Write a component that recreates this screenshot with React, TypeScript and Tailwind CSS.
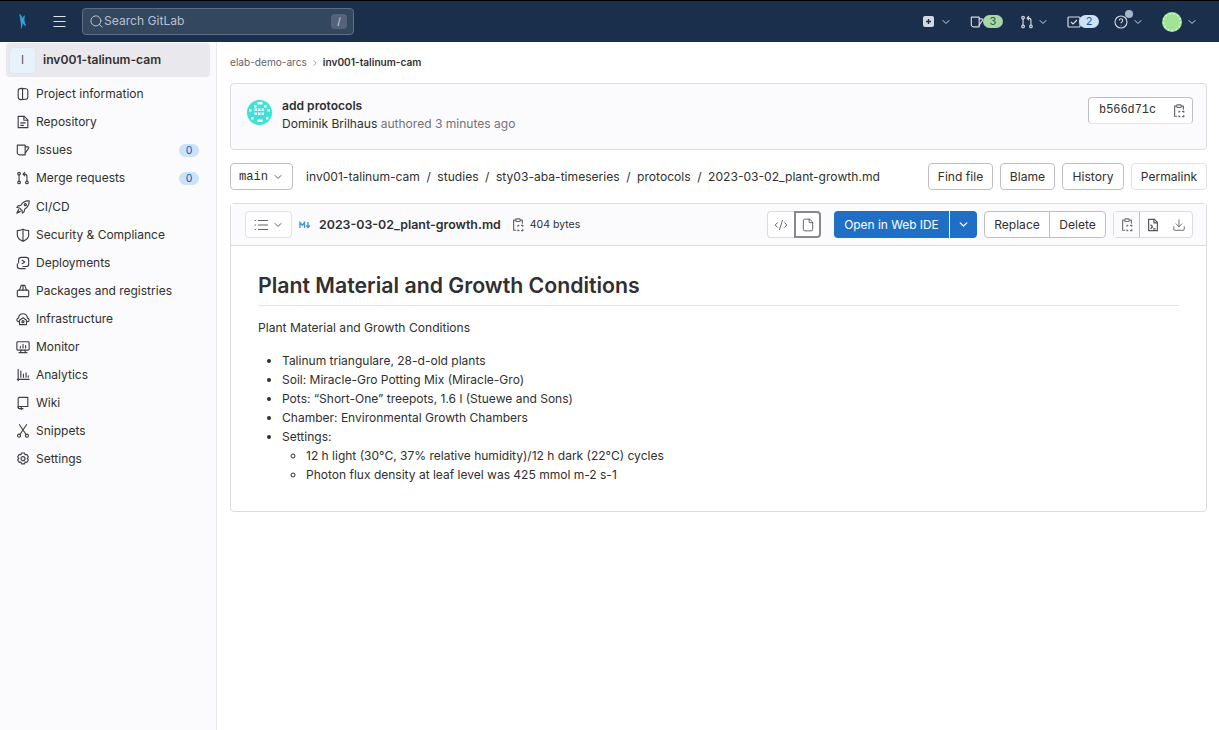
import { ChevronDown, ChevronRight, CodeXml, Download, File, Menu, Search } from "lucide-react"
import type { ReactNode } from "react"

const Svg = ({ children, size = 14, className = "" }: { children: ReactNode; size?: number; className?: string }) => (
  <svg
    width={size}
    height={size}
    viewBox="0 0 16 16"
    fill="none"
    stroke="currentColor"
    strokeWidth="1.3"
    strokeLinecap="round"
    strokeLinejoin="round"
    className={`shrink-0 ${className}`}
  >
    {children}
  </svg>
)

const IssueIcon = ({ size = 14 }: { size?: number }) => (
  <Svg size={size}>
    <path d="M1.500 2.500h9v11H4a2.500 2.500 0 0 1-2.500-2.500z" />
    <path d="M10.500 4.500h3.200c.8 0 1.100.7.8 1.300l-4 5.700" />
  </Svg>
)

const MergeIcon = ({ size = 14 }: { size?: number }) => (
  <Svg size={size}>
    <circle cx="3.500" cy="3" r="1.500" />
    <circle cx="3.500" cy="13" r="1.500" />
    <circle cx="12.500" cy="13" r="1.500" />
    <path d="M3.500 4.500v7M12.500 11.500V6c0-1.500-1-2.500-2.500-2.500H8.500M10 1.500l-2 2 2 2" />
  </Svg>
)

const CopyIcon = () => (
  <Svg size={14}>
    <path d="M5 2.500H3v11.500h2.500M11 2.500h2V6" />
    <rect x="5.500" y="1" width="5" height="3" rx="1" />
    <path d="M8 9.500V8.500h1M12 8.500h1.500v1M13.500 13v1.500h-1.500M9 14.500H8v-1" />
  </Svg>
)

const icons: Record<string, ReactNode> = {
  project: (
    <Svg>
      <path d="M6.500 1.500 11.500 2c1.200.1 2 .8 2 2v8c0 1.200-.8 1.900-2 2l-5 .5c-2.200 0-4-.8-4-2.500V4c0-1.700 1.800-2.500 4-2.500z" />
      <path d="M7.500 1.700v12.600" />
    </Svg>
  ),
  repo: (
    <Svg>
      <path d="M2.500 1.500h7L13.500 5.500v9h-11z" />
      <path d="M9 1.500V6h4.500M5.500 9h5M5.500 11.800h3" />
    </Svg>
  ),
  cicd: (
    <Svg>
      <path d="M15 1c-4.500-.3-7.500 1.500-9.500 5l-3 .7L1 8.500l3 .6L6.800 12l.6 3 1.800-1.500.7-3C12.900 8.500 15.300 5.500 15 1z" />
      <circle cx="10.700" cy="5.300" r="1.200" />
      <path d="M3 11 1 15l4-2" />
    </Svg>
  ),
  security: (
    <Svg>
      <path d="M8 1.500c2 1 4 1.500 6.500 1.500v5c0 3.300-2.700 5.700-6.500 7-3.800-1.300-6.500-3.700-6.500-7V3C4 3 6 2.500 8 1.500z" />
      <path d="M8 1.500V15" />
    </Svg>
  ),
  deploy: (
    <Svg>
      <path d="M3 8V4.500c0-1.700 1.300-3 3-3h5.500c1.700 0 3 1.300 3 3V9c0 1.700-1.300 3-3 3H8" />
      <path d="M1.500 9v2.500c0 1.700 1.300 3 3 3h6" />
      <path d="M7 4.800 10 6.800 7 8.800" />
    </Svg>
  ),
  packages: (
    <Svg>
      <path d="M4 7 6 1.500h4L12 7" />
      <path d="M8 1.500V7" />
      <rect x="1.500" y="7" width="13" height="7.500" rx="1.500" />
    </Svg>
  ),
  infra: (
    <Svg>
      <path d="M3.500 11H3C1.800 11 1 10 1 9c0-1 .7-1.800 1.800-2C3.200 4 5.300 2 8 2s4.800 2 5.200 5c1.100.2 1.800 1 1.800 2 0 1-.8 2-2 2h-.5" />
      <path d="M8 6.500 12 9.500v5H4v-5z" />
      <circle cx="8" cy="11" r="1.200" />
    </Svg>
  ),
  monitor: (
    <Svg>
      <rect x="1" y="2" width="14" height="9.500" rx="1" />
      <path d="M5 9V7.500M8 9V5M11 9V6.500M6 11.500 5 14.500M10 11.500l1 3M3.500 14.500h9" />
    </Svg>
  ),
  analytics: (
    <Svg>
      <path d="M2.500 1.500v13M1.500 13h13.500" />
      <path d="M5.500 10.500V3.500M8.500 10.500V7M11.500 10.500V5.500M14 10.500V9" />
    </Svg>
  ),
  wiki: (
    <Svg>
      <path d="M2.500 3A1.500 1.500 0 0 1 4 1.500h9.500V12H4a1.500 1.500 0 0 0-1.500 1.500z" />
      <path d="M2.500 12v1c0 .8.700 1.500 1.500 1.500h4M6 12v3.500" />
    </Svg>
  ),
  snippets: (
    <Svg>
      <circle cx="3.500" cy="13.300" r="1.700" />
      <circle cx="12.500" cy="13.300" r="1.700" />
      <path d="M4.500 12 12 .8M11.500 12 4 .8" />
    </Svg>
  ),
  settings: (
    <Svg>
      <path d="M6.300 1.200h3.400l.7 2 2.100-.4 1.700 2.900-1.400 1.600 1.400 1.600-1.700 2.900-2.100-.4-.7 2.100H6.300l-.7-2.100-2.100.4-1.700-2.900 1.400-1.600-1.400-1.600 1.700-2.900 2.100.4z" />
      <circle cx="8" cy="7.600" r="2.300" />
    </Svg>
  ),
}

const navItems = [
  { label: "Project information", icon: "project" },
  { label: "Repository", icon: "repo" },
  { label: "Issues", icon: "issues", count: 0 },
  { label: "Merge requests", icon: "merge", count: 0 },
  { label: "CI/CD", icon: "cicd" },
  { label: "Security & Compliance", icon: "security" },
  { label: "Deployments", icon: "deploy" },
  { label: "Packages and registries", icon: "packages" },
  { label: "Infrastructure", icon: "infra" },
  { label: "Monitor", icon: "monitor" },
  { label: "Analytics", icon: "analytics" },
  { label: "Wiki", icon: "wiki" },
  { label: "Snippets", icon: "snippets" },
  { label: "Settings", icon: "settings" },
]

const authorDots = [
  [11.500, 3], [14, 3],
  [8, 6], [18, 6],
  [3, 10], [8.500, 9.500], [12, 9.500], [15.500, 9.500], [21.500, 10],
  [8.500, 13.500], [12, 13.500], [15.500, 13.500],
  [5, 18], [20, 18],
  [11.500, 20.500], [14, 20.500],
]

const AuthorAvatar = () => (
  <svg width="27" height="27" viewBox="0 0 27 27" className="shrink-0">
    <circle cx="13.500" cy="13.500" r="13.500" fill="#f3f2f7" />
    <circle cx="13.500" cy="13.500" r="12.500" fill="#3fe0d8" />
    {authorDots.map(([x, y]) => (
      <rect key={`${x}-${y}`} x={x} y={y} width="2.500" height="2.500" fill="#fbfafd" />
    ))}
  </svg>
)

const Btn = ({ children, className = "" }: { children: ReactNode; className?: string }) => (
  <button
    type="button"
    className={`flex h-[27px] items-center justify-center rounded border border-[#bfbfc3] bg-white pt-px text-[12.1px] text-[#303030] ${className}`}
  >
    {children}
  </button>
)

export default function App() {
  return (
    <div className="flex h-[730px] flex-col overflow-hidden bg-white font-['Inter',sans-serif] text-[12.1px] text-[#303030]">
      <header className="flex h-[42px] shrink-0 items-center border-t border-black bg-[#1a2f4b] text-[#d5dae2]">
        <svg width="9" height="17" viewBox="0 0 8 16" className="ml-[18px] shrink-0">
          <path d="M1 .5c1.500 1 2.200 2.500 2.800 4.500C4.500 3.500 5.200 2.500 6.500 2c-.6 2-1 4-.5 6 .3 1.500 1 3 1.500 4.500-1.500-.5-2.600-1.500-3.200-3C4 11.500 3.500 14 2.500 15.500c0-2.500.3-5-.3-7.500C1.800 5.500 1.300 3 1 .5z" fill="#2ea3dc" />
        </svg>
        <Menu size={17} className="ml-[24px] shrink-0 text-[#dfe3e8]" strokeWidth={1.500} />
        <div className="ml-[14px] flex h-[27px] w-[272px] items-center rounded border border-[#5d6f87] bg-[#33475f] pl-[6px] pr-[6px]">
          <Search size={15} strokeWidth={1.500} className="text-[#c5ccd6]" />
          <span className="flex-1 text-[#b9c1cc]">Search GitLab</span>
          <span className="flex h-[15px] w-[16px] items-center justify-center rounded-sm bg-[#52637a] text-[10px] text-[#d5dae2]">/</span>
        </div>
        <div className="ml-auto flex items-center pr-[21px]">
          <svg width="11" height="11" viewBox="0 0 11 11" className="shrink-0">
            <rect width="11" height="11" rx="2" fill="#d5dae2" />
            <path d="M5.500 3v5M3 5.500h5" stroke="#1a2f4b" strokeWidth="1.400" />
          </svg>
          <ChevronDown size={12} className="ml-[6px]" />
          <div className="ml-[18px] flex items-center">
            <IssueIcon size={14} />
            <span className="-ml-px flex h-[13px] w-[20px] items-center justify-center rounded-full bg-[#a8d5a9] text-[11px] text-[#24663b]">3</span>
          </div>
          <div className="ml-[17px]">
            <MergeIcon size={14} />
          </div>
          <ChevronDown size={12} className="ml-[3px]" />
          <div className="ml-[18px] flex items-center">
            <svg width="14" height="14" viewBox="0 0 14 14" fill="none" stroke="currentColor" strokeWidth="1.200" className="shrink-0">
              <rect x="1" y="2" width="12" height="10" rx="1" />
              <path d="m4 7 2 2 4-4" />
            </svg>
            <span className="-ml-[2px] flex h-[13px] w-[20px] items-center justify-center rounded-full bg-[#cbe2f9] text-[11px] text-[#0b5cad]">2</span>
          </div>
          <div className="relative ml-[15px]">
            <svg width="14" height="14" viewBox="0 0 14 14" fill="none" stroke="currentColor" strokeWidth="1.100" className="shrink-0">
              <circle cx="7" cy="7" r="6" />
              <path d="M5.300 5.500a1.700 1.700 0 1 1 2.500 1.500c-.6.300-.8.600-.8 1.200M7 10v.4" />
            </svg>
            <span className="absolute right-[-5px] top-[-5px] size-2 rounded-full bg-[#a9b6c9]" />
          </div>
          <ChevronDown size={12} className="ml-[4px]" />
          <div className="ml-[18px]">
            <svg width="20" height="20" viewBox="0 0 20 20" className="shrink-0">
              <circle cx="10" cy="10" r="10" fill="#a0e596" />
              <circle cx="10" cy="10" r="8.500" fill="none" stroke="#ffffff" strokeWidth="1.300" strokeDasharray="1.300 2.800" />
            </svg>
          </div>
          <ChevronDown size={12} className="ml-[4px]" />
        </div>
      </header>

      <div className="flex min-h-0 flex-1">
        <aside className="w-[217px] shrink-0 border-r border-[#e9e9ee] bg-[#fbfafd] px-[6px] pt-px">
          <div className="flex h-[34px] w-[204px] items-center rounded bg-[#e9e8ec] pl-[3px]">
            <span className="flex size-[27px] items-center justify-center rounded border border-[#dfe6ee] bg-[#e8f2fb] text-[12px] font-light text-[#303030]">I</span>
            <span className="ml-[7px] font-semibold">inv001-talinum-cam</span>
          </div>
          <nav className="mt-[3.3px]">
            {navItems.map((item) => (
              <div key={item.label} className="flex h-[28.06px] items-center pl-[10px] pr-[11px] text-[12px] text-[#303030]">
                <span className="flex w-[14px] justify-center text-[#3f3f44]">
                  {item.icon === "issues" ? <IssueIcon /> : item.icon === "merge" ? <MergeIcon /> : icons[item.icon]}
                </span>
                <span className="ml-[6px] flex-1 whitespace-nowrap">{item.label}</span>
                {item.count !== undefined && (
                  <span className="flex h-[13px] w-[20px] items-center justify-center rounded-full bg-[#cbe2f9] text-[10.500px] text-[#0b5cad]">
                    {item.count}
                  </span>
                )}
              </div>
            ))}
          </nav>
        </aside>

        <main className="min-w-0 flex-1 pl-[13px] pr-[12px]">
          <div className="flex h-[41px] items-center text-[10.100px]">
            <span className="text-[#626168]">elab-demo-arcs</span>
            <ChevronRight size={10} className="mx-[3px] text-[#8b8a91]" />
            <span className="font-semibold text-[#303030]">inv001-talinum-cam</span>
          </div>

          <section className="flex h-[67px] items-start rounded border border-[#dcdcde] bg-[#fbfafd] pl-[15px] pr-[13px] pt-[13px]">
            <div className="mt-[2px]">
              <AuthorAvatar />
            </div>
            <div className="ml-[9px] leading-[18px]">
              <div className="font-semibold">add protocols</div>
              <div className="text-[12.05px]">
                Dominik Brilhaus <span className="text-[#737278]">authored 3 minutes ago</span>
              </div>
            </div>
            <div className="ml-auto flex h-[27px] w-[105px] items-center rounded border border-[#bfbfc3] border-b-[#e5e5e8] bg-white">
              <span className="flex-1 pl-[10px] font-['Liberation_Mono',monospace] text-[11.900px] text-[#303030]">b566d71c</span>
              <span className="flex h-full w-[27px] items-center justify-center text-[#626168]">
                <CopyIcon />
              </span>
            </div>
          </section>

          <div className="mt-[13px] flex h-[27px] items-center">
            <Btn className="w-[63px] gap-[4px] font-['Liberation_Mono',monospace]">
              main <ChevronDown size={12} className="text-[#626168]" />
            </Btn>
            <div className="ml-[13px] flex items-center gap-[6.5px] whitespace-nowrap pt-px">
              <span>inv001-talinum-cam</span>
              <span>/</span>
              <span>studies</span>
              <span>/</span>
              <span>sty03-aba-timeseries</span>
              <span>/</span>
              <span>protocols</span>
              <span>/</span>
              <span>2023-03-02_plant-growth.md</span>
            </div>
            <div className="ml-auto flex items-center gap-[7px]">
              <Btn className="w-[65px]">Find file</Btn>
              <Btn className="w-[55px]">Blame</Btn>
              <Btn className="w-[62px]">History</Btn>
              <Btn className="w-[76px] border-[#e1e1e4]">Permalink</Btn>
            </div>
          </div>

          <section className="mt-[13px] h-[309px] rounded border border-[#dcdcde]">
            <div className="flex h-[42px] items-center border-b border-[#dcdcde] bg-[#fbfafd] pl-[14px] pr-[13px]">
              <Btn className="w-[47px] gap-[3px] border-[#e1e1e4] text-[#626168]">
                <svg width="16" height="16" viewBox="0 0 16 16" fill="none" stroke="currentColor" strokeWidth="1.200" strokeLinecap="round" className="shrink-0">
                  <path d="M5.500 3.500h9M5.500 8h9M5.500 12.500h9M2 3.500h.5M2 8h.5M2 12.500h.5" />
                </svg>
                <ChevronDown size={12} />
              </Btn>
              <svg width="12" height="8" viewBox="0 0 12 8" fill="none" stroke="#428fdc" strokeWidth="1.300" className="ml-[7px] shrink-0">
                <path d="M1 7V1.500l2.300 2.700 2.200-2.700V7M9 1v5M7.200 4.500 9 6.500l1.800-2" />
              </svg>
              <span className="ml-[8px] pt-px text-[12.4px] font-semibold">2023-03-02_plant-growth.md</span>
              <span className="ml-[10px] text-[#626168]">
                <CopyIcon />
              </span>
              <span className="ml-[5px] pt-px text-[10.500px] text-[#303030]">404 bytes</span>

              <div className="ml-auto flex items-center">
                <div className="flex">
                  <button type="button" className="flex h-[27px] w-[27px] items-center justify-center rounded-l border border-r-0 border-[#dcdcde] bg-white text-[#535158]">
                    <CodeXml size={14} strokeWidth={1.500} />
                  </button>
                  <button type="button" className="flex h-[27px] w-[27px] items-center justify-center rounded-r border-2 border-[#89888d] bg-white text-[#535158]">
                    <File size={14} strokeWidth={1.500} />
                  </button>
                </div>
                <div className="ml-[13px] flex text-white">
                  <button type="button" className="flex h-[27px] w-[115px] items-center justify-center rounded-l bg-[#1f6fc6] pt-px text-[11.900px]">Open in Web IDE</button>
                  <button type="button" className="ml-px flex h-[27px] w-[27px] items-center justify-center rounded-r bg-[#1f6fc6]">
                    <ChevronDown size={13} strokeWidth={2.500} />
                  </button>
                </div>
                <div className="ml-[7px] flex">
                  <Btn className="w-[66px] rounded-r-none">Replace</Btn>
                  <Btn className="-ml-px w-[57px] rounded-l-none">Delete</Btn>
                </div>
                <div className="ml-[7px] flex h-[27px] w-[80px] items-center rounded border border-[#dcdcde] bg-white text-[#535158]">
                  <span className="flex h-full w-[26px] items-center justify-center border-r border-[#bfbfc3] bg-[#fbfafd] text-[#737278]">
                    <CopyIcon />
                  </span>
                  <span className="flex w-[26px] justify-center">
                    <Svg>
                      <path d="M3 1.500h6.500L13 5v9.500H3z" />
                      <path d="M9 1.500V5.500h4M5.500 8 7.500 10 5.500 12M8.500 12.500h2" />
                    </Svg>
                  </span>
                  <span className="flex flex-1 justify-center">
                    <Download size={14} strokeWidth={1.400} />
                  </span>
                </div>
              </div>
            </div>

            <article className="px-[27px] pt-[26px] text-[12.03px]">
              <h1 className="border-b border-[#e5e5e8] pb-[6px] text-[21.270px] font-semibold leading-[27px] text-[#303030]">
                Plant Material and Growth Conditions
              </h1>
              <p className="mt-[12px] text-[12.1px] leading-[19px]">Plant Material and Growth Conditions</p>
              <ul className="mt-[14px] list-disc pl-[24px] leading-[19px]">
                <li>Talinum triangulare, 28-d-old plants</li>
                <li>Soil: Miracle-Gro Potting Mix (Miracle-Gro)</li>
                <li>Pots: “Short-One” treepots, 1.6 l (Stuewe and Sons)</li>
                <li>Chamber: Environmental Growth Chambers</li>
                <li>
                  Settings:
                  <ul className="list-[circle] pl-[24px]">
                    <li>12 h light (30°C, 37% relative humidity)/12 h dark (22°C) cycles</li>
                    <li>Photon flux density at leaf level was 425 mmol m-2 s-1</li>
                  </ul>
                </li>
              </ul>
            </article>
          </section>
        </main>
      </div>
    </div>
  )
}
